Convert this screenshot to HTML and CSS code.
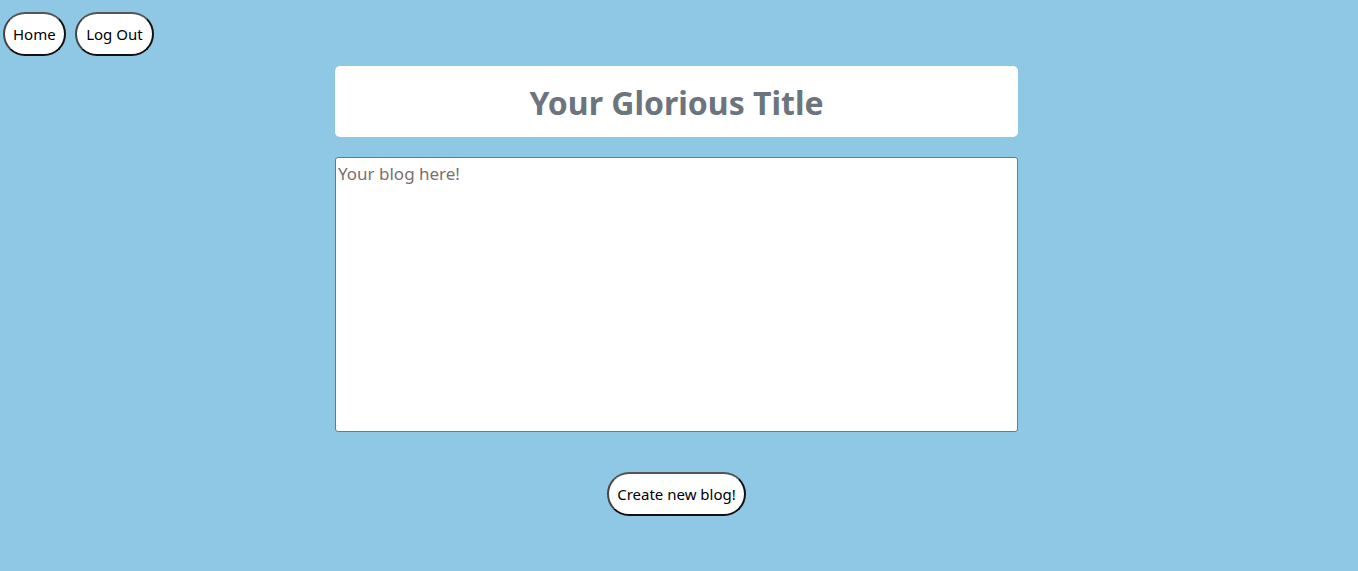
FILE: index.html
```html
<!DOCTYPE html>
<html>
<head>
<meta charset="utf-8">
<link rel="stylesheet" href="styles.css">
</head>
<body>
<nav class="nav">
  <button class="pill">Home</button>
  <button class="pill pill-wide">Log Out</button>
</nav>
<main class="page">
  <div class="editor">
    <div class="title-card"><h1 class="title">Your Glorious Title</h1></div>
    <textarea class="body-input" placeholder="Your blog here!"></textarea>
    <button class="pill create">Create new blog!</button>
  </div>
</main>
</body>
</html>
```
FILE: styles.css
```css
html, body {
  margin: 0;
  padding: 0;
  background: #8ec8e5;
  font-family: "Noto Sans", "Open Sans", sans-serif;
}
.nav {
  display: flex;
  gap: 9px;
  padding: 12px 0 0 3px;
  height: 44px;
}
.pill {
  font-family: inherit;
  font-size: 15px;
  color: #000;
  background: #fff;
  border: 2px solid;
  border-color: #555 #111 #111 #444;
  border-radius: 22px;
  padding: 0 8px;
  height: 44px;
  cursor: pointer;
}
.pill-wide {
  padding: 0 9.5px;
}
.page {
  width: 1353px;
}
.editor {
  width: 683px;
  margin: 10px auto 0;
  display: flex;
  flex-direction: column;
  align-items: center;
}
.title-card {
  width: 100%;
  height: 71px;
  background: #fff;
  border-radius: 5px;
  display: flex;
  align-items: center;
  justify-content: center;
}
.title {
  margin: 2px 0 0;
  font-size: 32px;
  font-weight: bold;
  color: #6c757d;
}
.body-input {
  box-sizing: border-box;
  width: 100%;
  height: 275px;
  margin-top: 20px;
  border: 1px solid #767676;
  border-radius: 3px;
  padding: 4px 2px 2px;
  font-family: inherit;
  font-size: 17px;
  resize: none;
  background: #fff;
}
.body-input::placeholder {
  color: #7a7070;
}
.create {
  margin-top: 40px;
}
```
